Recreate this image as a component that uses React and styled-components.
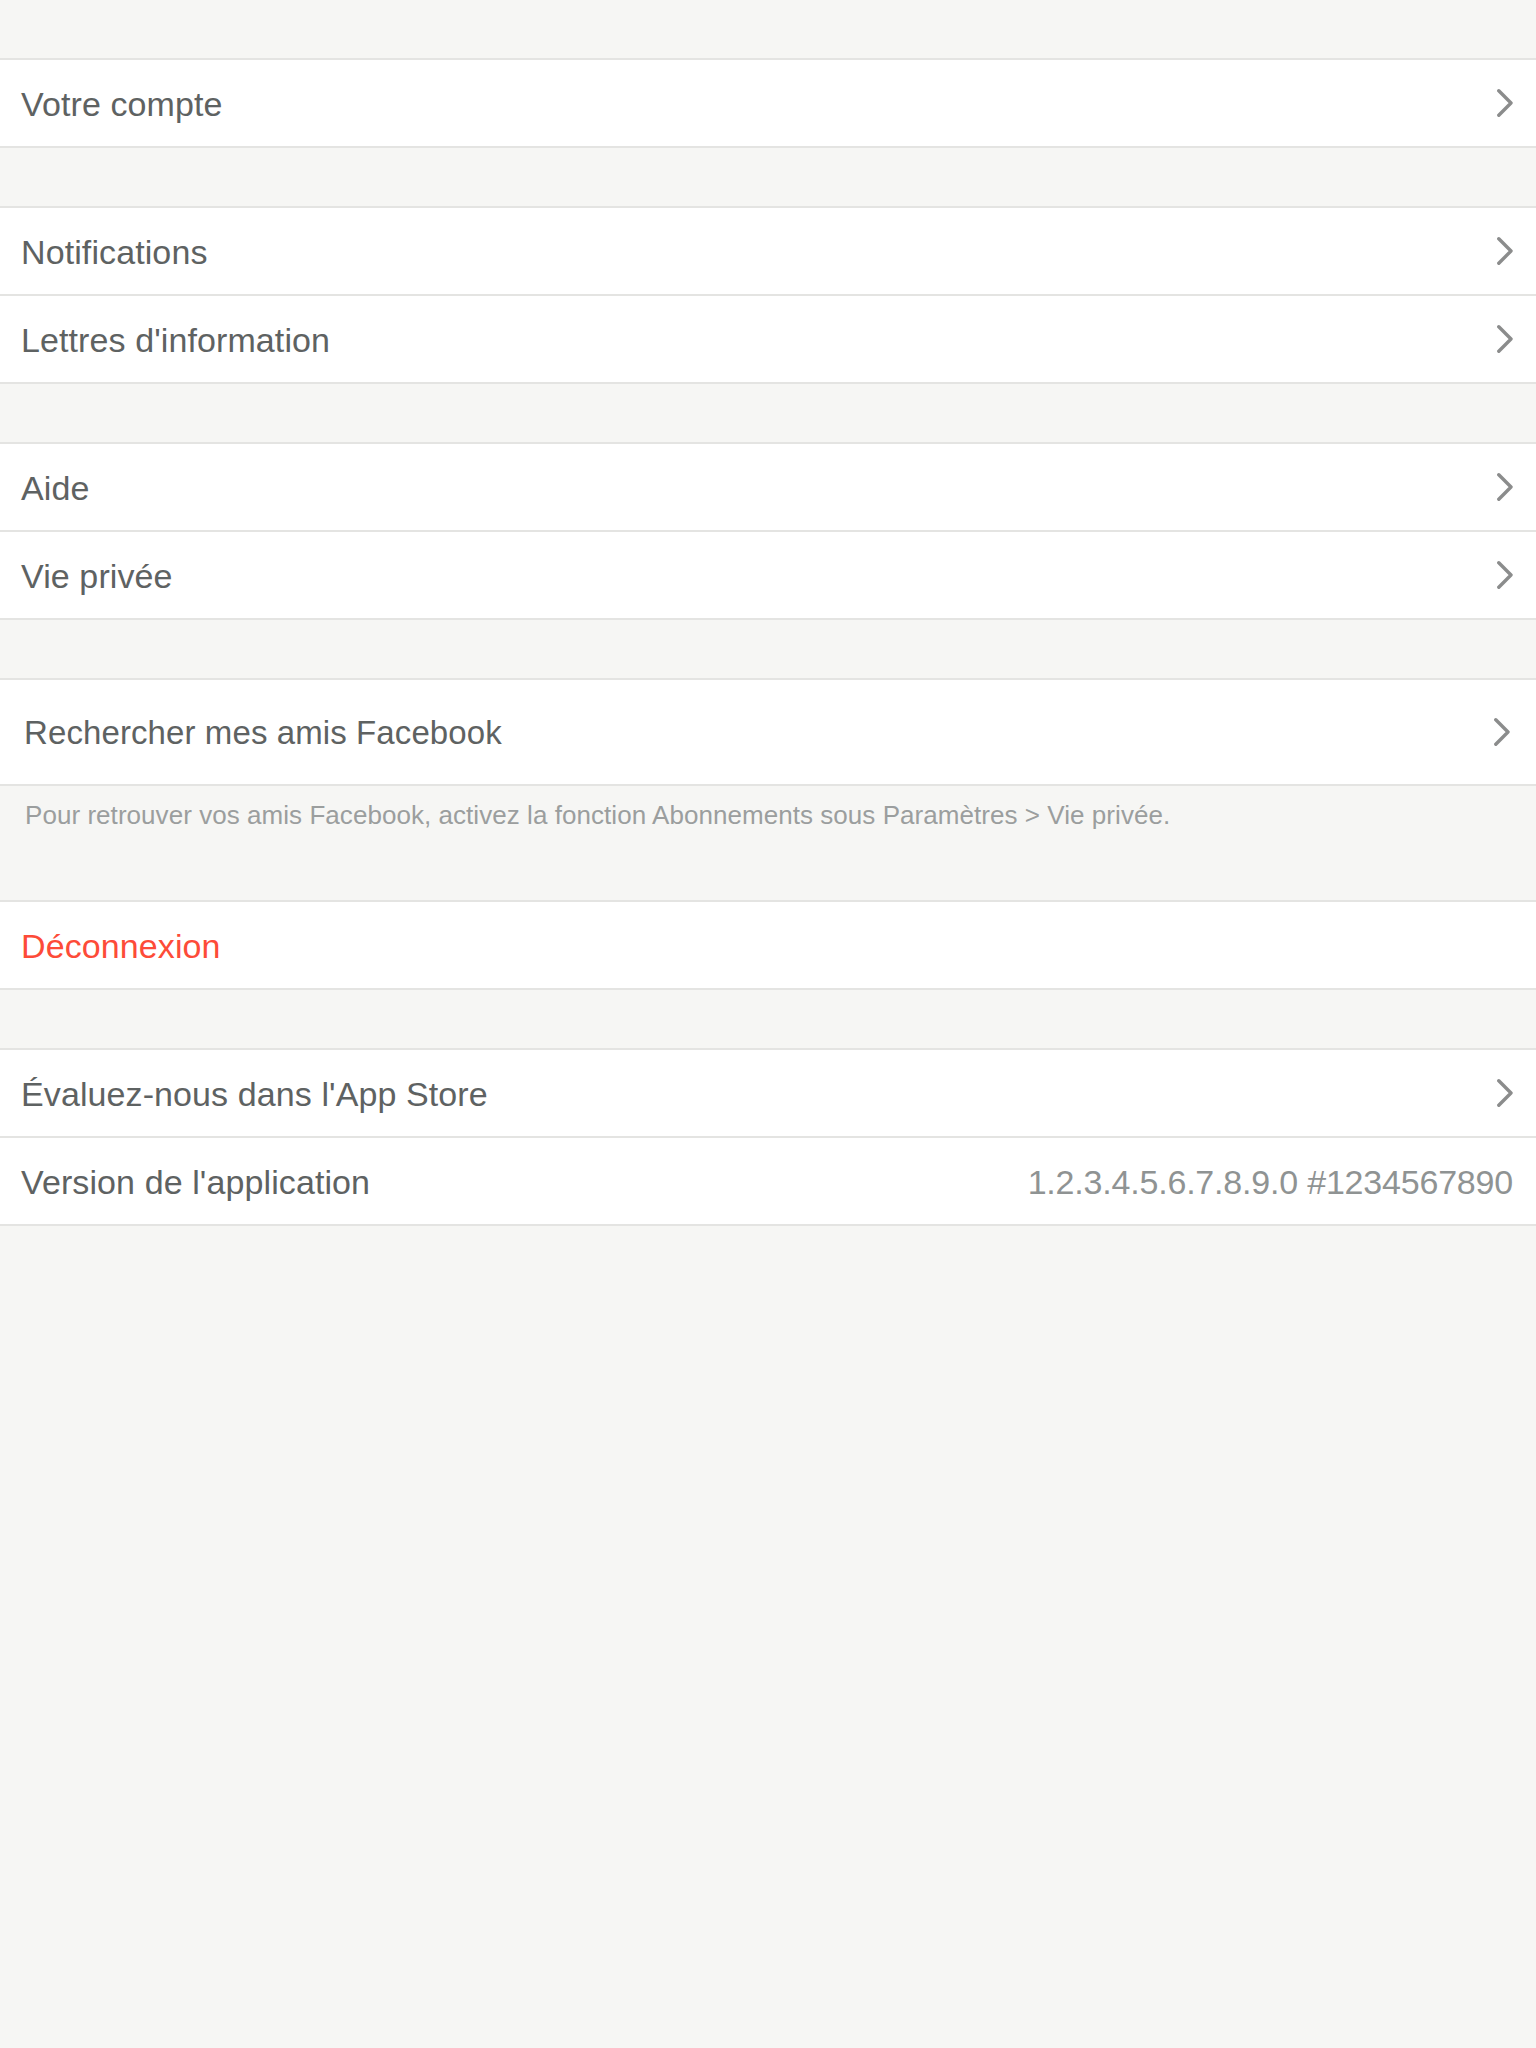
import React from 'react'
import styled, { createGlobalStyle } from 'styled-components'

const GlobalStyle = createGlobalStyle`
  html, body {
    margin: 0;
    padding: 0;
    background: #f6f6f4;
    font-family: "Liberation Sans", Arial, sans-serif;
    -webkit-font-smoothing: antialiased;
  }
`

const Page = styled.div`
  min-height: 2048px;
  background: #f6f6f4;
  padding-top: 58px;
  display: flex;
  flex-direction: column;
  gap: 58px;
`

const Block = styled.div`
  display: flex;
  flex-direction: column;
`

const Group = styled.div`
  background: #ffffff;
  border-top: 2px solid #e4e4e2;
`

const Row = styled.div`
  height: ${p => (p.$tall ? 104 : 86)}px;
  display: flex;
  align-items: center;
  justify-content: space-between;
  padding: 0 ${p => (p.$tall ? 26 : 23)}px 0 ${p => (p.$tall ? 24 : 21)}px;
  border-bottom: 2px solid #e4e4e2;
  background: #ffffff;
`

const Label = styled.span`
  padding-top: 2px;
  font-size: ${p => (p.$small ? 33 : 34)}px;
  color: ${p => (p.$danger ? '#fd4b38' : '#5e6262')};
  letter-spacing: 0.1px;
`

const Value = styled.span`
  padding-top: 2px;
  font-size: 34px;
  color: #8f9393;
  letter-spacing: -0.2px;
`

const Footer = styled.p`
  margin: 0;
  padding: 13px 24px 11px 25px;
  font-size: 26px;
  line-height: 32px;
  color: #9b9e9e;
  letter-spacing: 0.05px;
`

const Chevron = () => (
  <svg width="16" height="28" viewBox="0 0 16 28">
    <polyline
      points="1.8,1.8 14,14 1.8,26.2"
      fill="none"
      stroke="#8b8c8c"
      strokeWidth="3.4"
      strokeLinecap="round"
      strokeLinejoin="round"
    />
  </svg>
)

function Item({ label, value, chevron = true, danger, tall }) {
  return (
    <Row $tall={tall}>
      <Label $danger={danger} $small={tall}>{label}</Label>
      {value ? <Value>{value}</Value> : chevron && <Chevron />}
    </Row>
  )
}

export default function App() {
  return (
    <>
      <GlobalStyle />
      <Page>
        <Group>
          <Item label="Votre compte" />
        </Group>
        <Group>
          <Item label="Notifications" />
          <Item label="Lettres d'information" />
        </Group>
        <Group>
          <Item label="Aide" />
          <Item label="Vie privée" />
        </Group>
        <Block>
          <Group>
            <Item label="Rechercher mes amis Facebook" tall />
          </Group>
          <Footer>
            Pour retrouver vos amis Facebook, activez la fonction Abonnements sous Paramètres &gt; Vie privée.
          </Footer>
        </Block>
        <Group>
          <Item label="Déconnexion" danger chevron={false} />
        </Group>
        <Group>
          <Item label="Évaluez-nous dans l'App Store" />
          <Item label="Version de l'application" value="1.2.3.4.5.6.7.8.9.0 #1234567890" />
        </Group>
      </Page>
    </>
  )
}
